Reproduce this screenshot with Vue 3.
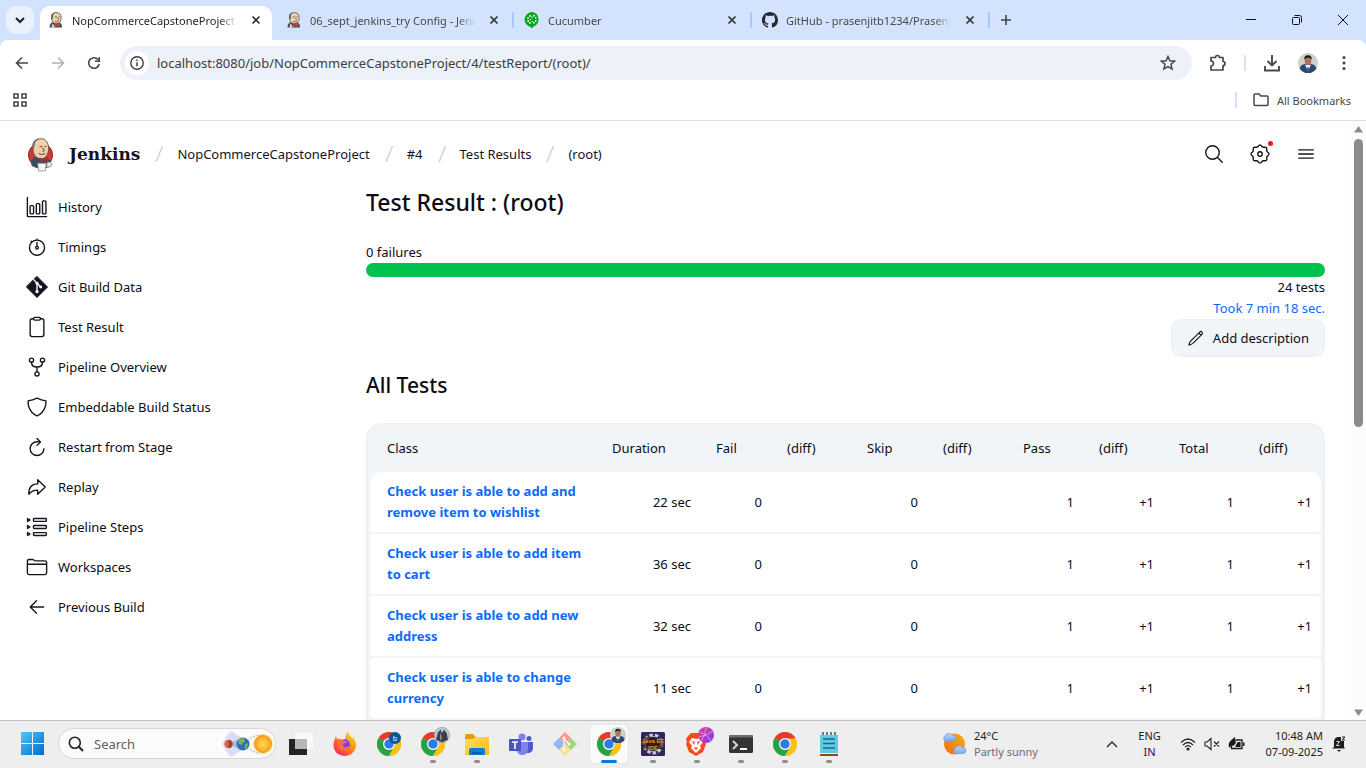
<script setup>
const tabs = [
  { title: 'NopCommerceCapstoneProject #4', icon: 'butler', active: true },
  { title: '06_sept_jenkins_try Config - Jenkins', icon: 'butler', line: true },
  { title: 'Cucumber', icon: 'cucumber', line: true },
  { title: 'GitHub - prasenjitb1234/Prasenjit', icon: 'github', line: true }
]

const crumbs = ['NopCommerceCapstoneProject', '#4', 'Test Results', '(root)']

const menu = [
  { label: 'History', d: ['M32 32v432a16 16 0 0016 16h432', 'M116 224h40a20 20 0 0120 20v152a20 20 0 01-20 20h-40a20 20 0 01-20-20V244a20 20 0 0120-20z', 'M260 176h40a20 20 0 0120 20v200a20 20 0 01-20 20h-40a20 20 0 01-20-20V196a20 20 0 0120-20z', 'M404 112h40a20 20 0 0120 20v264a20 20 0 01-20 20h-40a20 20 0 01-20-20V132a20 20 0 0120-20z'] },
  { label: 'Timings', d: ['M256 232v-80M256 88V72M132 132l-12-12', 'M256 96a176 176 0 10176 176A176 176 0 00256 96z', 'M288 272a32 32 0 11-64 0 32 32 0 0164 0z'] },
  { label: 'Git Build Data', git: true },
  { label: 'Test Result', d: ['M336 64h32a48 48 0 0148 48v320a48 48 0 01-48 48H144a48 48 0 01-48-48V112a48 48 0 0148-48h32', 'M202 32h108a26 26 0 0126 26v12a26 26 0 01-26 26H202a26 26 0 01-26-26V58a26 26 0 0126-26z'] },
  { label: 'Pipeline Overview', d: ['M176 96a48 48 0 11-96 0 48 48 0 0196 0z', 'M432 96a48 48 0 11-96 0 48 48 0 0196 0z', 'M304 416a48 48 0 11-96 0 48 48 0 0196 0z', 'M128 144c0 74 50 112 128 112s128-38 128-112M256 256v112'] },
  { label: 'Embeddable Build Status', d: ['M463.1 112.37C373.68 96.33 336.71 84.45 256 48c-80.71 36.45-117.68 48.33-207.1 64.37C32.7 369.13 240.58 457.79 256 464c15.42-6.21 223.3-94.87 207.1-351.63z'] },
  { label: 'Restart from Stage', d: ['M320 146s24.36-12-64-12a160 160 0 10160 160', 'M256 58l80 80-80 80'] },
  { label: 'Replay', d: ['M448 256L272 88v96C103.57 184 64 304.77 64 424c48.61-62.24 91.6-96 208-96v96z'] },
  { label: 'Pipeline Steps', d: ['M36 58l56 34-56 34zM36 222l56 34-56 34zM36 386l56 34-56 34z', 'M192 58h264a18 18 0 0118 18v32a18 18 0 01-18 18H192a18 18 0 01-18-18V76a18 18 0 0118-18z', 'M192 222h264a18 18 0 0118 18v32a18 18 0 01-18 18H192a18 18 0 01-18-18v-32a18 18 0 0118-18z', 'M192 386h264a18 18 0 0118 18v32a18 18 0 01-18 18H192a18 18 0 01-18-18v-32a18 18 0 0118-18z'] },
  { label: 'Workspaces', d: ['M440 432H72a40 40 0 01-40-40V120a40 40 0 0140-40h75.89a40 40 0 0122.19 6.72l27.84 18.56a40 40 0 0022.19 6.72H440a40 40 0 0140 40v240a40 40 0 01-40 40zM32 192h448'] },
  { label: 'Previous Build', d: ['M244 400L100 256l144-144M120 256h292'] }
]

const gear = Array.from({ length: 97 }, (_, i) => {
  const a = (i / 96) * Math.PI * 2
  const r = 190 + 18 * Math.cos(8 * a)
  return `${i ? 'L' : 'M'}${(256 + r * Math.sin(a)).toFixed(1)} ${(256 - r * Math.cos(a)).toFixed(1)}`
}).join('') + 'z'

const columns = ['Class', 'Duration', 'Fail', '(diff)', 'Skip', '(diff)', 'Pass', '(diff)', 'Total', '(diff)']
const rows = [
  { name: 'Check user is able to add and remove item to wishlist', time: '22 sec' },
  { name: 'Check user is able to add item to cart', time: '36 sec' },
  { name: 'Check user is able to add new address', time: '32 sec' },
  { name: 'Check user is able to change currency', time: '11 sec' }
]

const apps = [
  { id: 'taskview', name: 'Task view' },
  { id: 'firefox', name: 'Firefox' },
  { id: 'chrome', name: 'Chrome, profile b', badge: 'b' },
  { id: 'chrome', name: 'Chrome, group profile', badge: 'group', open: true },
  { id: 'explorer', name: 'File Explorer', open: true },
  { id: 'teams', name: 'Teams' },
  { id: 'gitapp', name: 'Git' },
  { id: 'chrome', name: 'Chrome, current profile', badge: 'person', open: true, current: true },
  { id: 'eclipse', name: 'Java EE IDE', open: true },
  { id: 'brave', name: 'Brave', badge: 'ball', open: true },
  { id: 'terminal', name: 'Terminal', open: true },
  { id: 'chrome', name: 'Chrome', open: true },
  { id: 'notepad', name: 'Notepad', open: true }
]
</script>

<template>
  <div class="screen">
    <svg class="defs" aria-hidden="true">
      <defs>
        <linearGradient id="win" x1="0" y1="0" x2="1" y2="1"><stop offset="0" stop-color="#4cc9f7" /><stop offset="1" stop-color="#0468c8" /></linearGradient>
        <linearGradient id="fold" x1="0" y1="0" x2="1" y2="1"><stop offset="0" stop-color="#ffdf6b" /><stop offset="1" stop-color="#fbb912" /></linearGradient>
        <linearGradient id="fox" x1="1" y1="0" x2=".2" y2="1"><stop offset="0" stop-color="#fff44f" /><stop offset=".45" stop-color="#ff980e" /><stop offset="1" stop-color="#ff1d62" /></linearGradient>
        <radialGradient id="sun"><stop offset="0" stop-color="#ffd95a" /><stop offset=".7" stop-color="#fdb32a" /><stop offset="1" stop-color="#f59a1b" /></radialGradient>
        <linearGradient id="wsun" x1="1" y1="0" x2="0" y2="1"><stop offset="0" stop-color="#f9ad1c" /><stop offset="1" stop-color="#ee6d16" /></linearGradient>
        <linearGradient id="cloud" x1="0" y1="0" x2="0" y2="1"><stop offset="0" stop-color="#bcd8f8" /><stop offset="1" stop-color="#7ea6ea" /></linearGradient>
        <linearGradient id="ball" x1="0" y1="0" x2="1" y2="1"><stop offset="0" stop-color="#e8399b" /><stop offset="1" stop-color="#7a3ff0" /></linearGradient>
      </defs>
      <symbol id="butler" viewBox="0 0 32 32">
        <path d="M3 31c0-7 3-10 7-11l12 1c4 1 6 4 6 10z" fill="#335061" />
        <path d="M8 5C11 0 20 0 24 4c3 4 3 10 1 14-2 5-7 6-11 5-5-2-9-8-6-18z" fill="#e8cfae" stroke="#4b443c" stroke-width="1.4" />
        <path d="M7 14C4 9 7 2 14 1c-2 3-4 4-4 8 0 2 0 4-1 6z" fill="#6b665f" />
        <path d="M14 10q2-1 4 0M21 10q2-1 3 0M19 11l2 4-2 1M14 19q4 2 8-1" fill="none" stroke="#4b443c" stroke-width="1.3" />
        <path d="M13 23l5 2 6-3v8l-5-2-5 3z" fill="#d33833" />
        <path d="M9 22l5 9h-7z" fill="#f0d6b7" />
      </symbol>
      <symbol id="cucumber" viewBox="0 0 16 16">
        <path d="M8 0A7.500 7.500 0 0 0 6 14.700L8.500 16.500l.7-1.900A7.500 7.500 0 0 0 8 0z" fill="#00a818" />
        <g fill="#fff"><circle cx="6" cy="4" r=".9" /><circle cx="10" cy="3.700" r=".9" /><circle cx="4" cy="6.200" r=".9" /><circle cx="4.200" cy="9" r=".9" /><circle cx="6" cy="11" r=".9" /><circle cx="9.800" cy="10.800" r=".9" /><circle cx="11.700" cy="9" r=".9" /><circle cx="8" cy="5" r=".7" /><circle cx="11.700" cy="5.800" r=".9" /><circle cx="6.500" cy="7.500" r=".7" /><circle cx="8.200" cy="9.400" r=".7" /></g>
      </symbol>
      <symbol id="github" viewBox="0 0 16 16">
        <path fill="#24292f" d="M8 0C3.580 0 0 3.580 0 8c0 3.540 2.290 6.530 5.470 7.590.4.070.55-.17.55-.38 0-.19-.01-.82-.01-1.490-2.010.37-2.530-.49-2.690-.94-.09-.23-.48-.94-.82-1.130-.28-.15-.68-.52-.01-.53.63-.01 1.080.58 1.230.82.72 1.210 1.870.87 2.330.66.07-.52.28-.87.51-1.070-1.780-.2-3.640-.89-3.640-3.950 0-.87.31-1.590.82-2.150-.08-.2-.36-1.020.08-2.120 0 0 .67-.21 2.200.82.64-.18 1.320-.27 2-.27s1.360.09 2 .27c1.530-1.040 2.200-.82 2.200-.82.44 1.100.16 1.920.08 2.120.51.56.82 1.270.82 2.150 0 3.070-1.870 3.750-3.650 3.950.29.25.54.73.54 1.480 0 1.070-.01 1.930-.01 2.200 0 .21.15.46.55.38A8.010 8.010 0 0 0 16 8c0-4.420-3.580-8-8-8z" />
      </symbol>
      <symbol id="face" viewBox="0 0 24 24">
        <circle cx="12" cy="12" r="12" fill="#cfcecb" />
        <path d="M2 19c1-5 5-6 10-6s9 1 10 6a12 12 0 0 1-20 0z" fill="#2d4770" />
        <path d="M8.500 14l3.500 8 3.500-8z" fill="#e8f0ff" />
        <ellipse cx="12" cy="9" rx="4" ry="5.500" fill="#a8745a" />
        <path d="M7.500 8c-1-7 10-7 9 0-1-3-7-3-9 0z" fill="#1d1a1c" />
        <path d="M12 16l-1 3 1 4 1-4z" fill="#203050" />
      </symbol>
      <symbol id="chrome" viewBox="0 0 24 24">
        <circle cx="12" cy="12" r="12" fill="#fbc116" />
        <path d="M12 12L1.600 6A12 12 0 0 1 22.400 6z" fill="#e33b2e" />
        <path d="M1.600 6A12 12 0 0 0 12 24l5.200-9L12 12z" fill="#2aa148" />
        <path d="M12 6.500h10.700A12 12 0 0 1 12 24l5-9z" fill="#fbc116" />
        <circle cx="12" cy="12" r="6" fill="#fff" />
        <circle cx="12" cy="12" r="4.700" fill="#2a7bea" />
      </symbol>
      <symbol id="taskview" viewBox="0 0 24 24">
        <path d="M0 7h18v16H0z" fill="#242424" /><path d="M6 1h18v16H6z" fill="#f9f9f9" /><path d="M6 7h12v10H6z" fill="#b7b7b7" />
      </symbol>
      <symbol id="firefox" viewBox="0 0 24 24">
        <path d="M15 0c1 3 3 4 4 6l1-1c3 4 4 7 3 10-1 5-6 9-11 9C5 24 0 19 .5 12 .8 9 2 6 3 4l1 3 4 1 4-1c0-3 1-6 3-7z" fill="url(#fox)" />
        <circle cx="12" cy="12.500" r="5" fill="#7542e5" />
        <path d="M2 7c4 0 5-1 9 2 2 0 3 0 3 1-1 2-4 1-4 3 0 3 6 3 8-1-1 6-4 8-9 6-4-2-4-7-4-8z" fill="#ff7139" opacity=".9" />
      </symbol>
      <symbol id="explorer" viewBox="0 0 24 24">
        <path d="M0 4q0-2 2-2h6l3 3h11q2 0 2 2v8H0z" fill="#e79c0b" />
        <path d="M0 7h8l3-2h11q2 0 2 2v16H0z" fill="url(#fold)" />
        <path d="M4 23v-5q0-2 2-2h12q2 0 2 2v5z" fill="#0f7bd4" /><path d="M7 20h10v2H7z" fill="#0a5ca8" />
      </symbol>
      <symbol id="teams" viewBox="0 0 24 24">
        <circle cx="20" cy="6.500" r="2.500" fill="#5059c9" /><circle cx="13" cy="5" r="3.500" fill="#7b83eb" />
        <path d="M16 10h8v6q0 4-4 5h-4z" fill="#5059c9" /><path d="M8 10h11v7q0 6-6 6-4 0-5-4z" fill="#7b83eb" />
        <rect y="7" width="12" height="12" rx="1" fill="#4b53bc" /><path d="M3 10h6M6 10v7" stroke="#fff" stroke-width="1.600" />
      </symbol>
      <symbol id="gitapp" viewBox="0 0 24 24">
        <path d="M12 0l6 6-6 6-6-6z" fill="#ff9a8b" /><path d="M6 6l6 6-6 6-6-6z" fill="#8db8fa" /><path d="M18 6l6 6-6 6-6-6z" fill="#99d87c" /><path d="M12 12l6 6-6 6-6-6z" fill="#fbe18d" />
        <path d="M11 5v13M11 7l5 5" stroke="#f2efee" stroke-width="1.500" /><circle cx="11" cy="6" r="1.500" fill="#fff" /><circle cx="11" cy="18" r="1.500" fill="#fff" /><circle cx="16" cy="12" r="1.500" fill="#fff" />
      </symbol>
      <symbol id="eclipse" viewBox="0 0 24 24">
        <rect width="24" height="24" rx="1.500" fill="#36235f" />
        <circle cx="12" cy="12" r="9" fill="none" stroke="#c9c9d2" stroke-width="3" stroke-dasharray="3.500 2" /><circle cx="12" cy="12" r="7.500" fill="#252026" stroke="#b5b5bd" />
        <rect x="1" y="5" width="22" height="12" fill="#2d1b28" opacity=".65" />
      </symbol>
      <symbol id="brave" viewBox="0 0 24 24">
        <path d="M6 1h9l3 3 3 3-1 3 1 2-3 8-7 4-7-4-3-8 1-2-1-3 2-3z" fill="#fb4a1d" />
        <path d="M7 6l4 1 5-1 2 4-3 4 1 2-5 5-5-5 1-2-3-4z" fill="#fff" /><path d="M7 9l3 1-1 3zM15 9l-3 1 1 3zM9 16l2-1 2 1-2 2z" fill="#fb4a1d" />
      </symbol>
      <symbol id="terminal" viewBox="0 0 24 24">
        <rect y="3" width="24" height="18" rx="1.500" fill="#343434" /><path d="M0 5.500V4.500Q0 3 1.500 3h21Q24 3 24 4.500v1z" fill="#6c6c6c" />
        <path d="M4 9l4 4-4 4" fill="none" stroke="#d4d4d4" stroke-width="2" /><path d="M11 17h7" stroke="#fff" stroke-width="2" />
      </symbol>
      <symbol id="notepad" viewBox="0 0 24 24">
        <path d="M3 3h18v18H3z" fill="#5fcbe0" /><path d="M3 21h18v3H3z" fill="#924912" /><path d="M3 21h18v1H3z" fill="#f4efe9" />
        <path d="M6 0v3M10 0v3M14 0v3M18 0v3" stroke="#1d5f7c" stroke-width="1.500" /><path d="M6 7h12M6 11.500h12M6 16h12" stroke="#17698b" stroke-width="1.500" />
      </symbol>
    </svg>

    <header class="browser">
      <div class="tabstrip">
        <button class="tabsearch" aria-label="Search tabs"><svg width="12" height="12" viewBox="0 0 12 12"><path d="M2 4l4 4 4-4" fill="none" stroke="#1f1f1f" stroke-width="2" /></svg></button>
        <div v-for="t in tabs" :key="t.title" class="tab" :class="{ active: t.active, line: t.line }">
          <svg width="16" height="16"><use :href="'#' + t.icon" /></svg>
          <span class="tabtitle">{{ t.title }}</span>
          <button class="tabclose" aria-label="Close tab"><svg width="10" height="10" viewBox="0 0 10 10"><path d="M1.500 1.500l7 7m0-7l-7 7" stroke="#333" stroke-width="1.700" /></svg></button>
        </div>
        <button class="newtab" aria-label="New tab"><svg width="12" height="12" viewBox="0 0 12 12"><path d="M6 1v10M1 6h10" stroke="#444" stroke-width="1.600" /></svg></button>
        <div class="winbuttons">
          <button aria-label="Minimize"><svg width="12" height="12"><path d="M1 5.500h10" stroke="#111" /></svg></button>
          <button aria-label="Restore"><svg width="12" height="12" fill="none" stroke="#111"><rect x="1.500" y="3.500" width="7" height="7" rx="1" /><path d="M3.500 1.500h5a2 2 0 0 1 2 2v5" /></svg></button>
          <button aria-label="Close window"><svg width="12" height="12"><path d="M1 1l10 10M11 1L1 11" stroke="#111" /></svg></button>
        </div>
      </div>

      <div class="toolbar">
        <button class="nav" aria-label="Back"><svg width="16" height="16" viewBox="0 0 16 16"><path d="M14 8H3M8 2.500L2.500 8 8 13.500" fill="none" stroke="#474747" stroke-width="1.600" /></svg></button>
        <button class="nav" aria-label="Forward"><svg width="16" height="16" viewBox="0 0 16 16"><path d="M2 8h11M8 2.500L13.500 8 8 13.500" fill="none" stroke="#b0b0b0" stroke-width="1.600" /></svg></button>
        <button class="nav" aria-label="Reload"><svg width="16" height="16" viewBox="0 0 16 16"><path d="M13.200 9A5.300 5.300 0 1 1 12 4.500l1 1" fill="none" stroke="#474747" stroke-width="1.600" /><path d="M14 2v5H9V5.500h3.500V2z" fill="#474747" /></svg></button>
        <div class="omnibox">
          <button class="info" aria-label="Site information"><svg width="14" height="14" viewBox="0 0 14 14"><circle cx="7" cy="7" r="6.200" fill="none" stroke="#3c3c3c" stroke-width="1.400" /><path d="M7 6.200v4M7 3.500v1.500" stroke="#3c3c3c" stroke-width="1.500" /></svg></button>
          <input class="url" aria-label="Address" value="localhost:8080/job/NopCommerceCapstoneProject/4/testReport/(root)/" />
          <button class="star" aria-label="Bookmark"><svg width="16" height="16" viewBox="0 0 16 16"><path d="M8 1.500l1.900 4.300 4.700.4-3.600 3.100 1.100 4.600L8 11.500l-4.100 2.400L5 9.300 1.400 6.200l4.700-.4z" fill="none" stroke="#474747" stroke-width="1.500" /></svg></button>
        </div>
        <div class="tools">
          <button class="nav" aria-label="Extensions"><svg width="18" height="18" viewBox="0 0 18 18"><path d="M2 3.500h4.500a2 2 0 0 1 4 0h3.500v4a2 2 0 0 1 0 4V16H2v-4a2.500 2.500 0 0 0 0-5z" fill="none" stroke="#474747" stroke-width="1.700" stroke-linejoin="round" /></svg></button>
          <span class="divider"></span>
          <button class="nav" aria-label="Downloads"><svg width="18" height="18" viewBox="0 0 18 18"><path d="M9 1v10M4.500 7L9 11.500 13.500 7M2 12v4.500h14V12" fill="none" stroke="#474747" stroke-width="1.900" /></svg></button>
          <button class="nav" aria-label="Profile"><svg width="20" height="20"><use href="#face" /></svg></button>
          <button class="nav" aria-label="Menu"><svg width="4" height="16" fill="#474747"><circle cx="2" cy="2.500" r="1.600" /><circle cx="2" cy="8" r="1.600" /><circle cx="2" cy="13.500" r="1.600" /></svg></button>
        </div>
      </div>

      <div class="bookmarks">
        <button class="nav" aria-label="Apps"><svg width="14" height="14" fill="none" stroke="#474747" stroke-width="1.600"><path d="M1 1h4v4H1zM9 1h4v4H9zM1 9h4v4H1zM9 9h4v4H9z" /></svg></button>
        <button class="allmarks"><svg width="16" height="14" viewBox="0 0 16 14"><path d="M1 2q0-1 1-1h4l2 2h6q1 0 1 1v7q0 1.500-1 1.500H2q-1 0-1-1.500z" fill="none" stroke="#474747" stroke-width="1.500" /></svg>All Bookmarks</button>
      </div>
    </header>

    <div class="viewport">
      <div class="page">
        <nav class="crumbbar" aria-label="Breadcrumbs">
          <a href="#" class="brand">
            <svg class="logo" viewBox="0 0 28 36">
              <circle cx="14" cy="18.500" r="12.500" fill="#d33833" stroke="#7c2a27" />
              <path d="M5 30C3 25 6 21 9 20l10 1c5 1 7 5 4 10q-9 4-18-1z" fill="#335061" />
              <path d="M7 7C9 1 17 0 20 4c3 4 3 10 1 14-2 4-5 5-9 4C7 20 5 15 7 7z" fill="#efd0a8" stroke="#4a4038" stroke-width=".8" />
              <path d="M6 12C4 7 7 2 13 1c-3 3-5 4-5 7l-1 5z" fill="#787774" />
              <path d="M13 10q2-1 3 0M18 10q1-1 2 0M16 11l2 3-2 1M12 17q3 2 7 0" fill="none" stroke="#493f38" />
              <path d="M13 21l4 2 4-2v5l-4-2-4 2z" fill="#ba2827" />
              <path d="M11 27h9l-1 8h-7z" fill="#f8f8f8" stroke="#777" stroke-width=".7" /><path d="M21 26q5-1 5 3l-3 2h-3z" fill="#e5e8eb" stroke="#777" stroke-width=".7" />
            </svg>
            <span class="brandname">Jenkins</span>
          </a>
          <template v-for="c in crumbs" :key="c">
            <svg class="slash" width="8" height="18"><path d="M7.500 1L1 17" stroke="#c9d4e4" stroke-width="1.500" /></svg>
            <a href="#" class="crumb">{{ c }}</a>
          </template>
          <div class="actions">
            <button aria-label="Search"><svg class="ico" viewBox="0 0 512 512"><path d="M221 64a157 157 0 10157 157A157 157 0 00221 64zM338 338l110 110" /></svg></button>
            <button class="dotted" aria-label="Manage Jenkins"><svg class="ico" viewBox="0 0 512 512"><path :d="gear" /><circle cx="256" cy="256" r="52" /></svg></button>
            <button aria-label="More"><svg class="ico" viewBox="0 0 512 512"><path d="M88 160h336M88 256h336M88 352h336" /></svg></button>
          </div>
        </nav>

        <div class="columns">
          <aside class="side">
            <a v-for="m in menu" :key="m.label" href="#">
              <svg v-if="m.git" class="ico" viewBox="0 0 24 24"><path class="solid" d="M12 .5L23.500 12 12 23.500.5 12z" /><path class="gitline" d="M8.500 4l3.500 4v9M12 8l4 4" /><circle class="gitdot" cx="12" cy="8" r="1.600" /><circle class="gitdot" cx="12" cy="17" r="1.800" /><circle class="gitdot" cx="16" cy="12" r="1.600" /></svg>
              <svg v-else class="ico" viewBox="0 0 512 512"><path v-for="d in m.d" :key="d" :d="d" /></svg>
              {{ m.label }}
            </a>
          </aside>

          <main class="main">
            <h1>Test Result : (root)</h1>
            <div class="line">0 failures</div>
            <div class="bar" role="img" aria-label="All tests passed"></div>
            <div class="line right">24 tests</div>
            <div class="line right"><a href="#">Took 7 min 18 sec.</a></div>
            <button class="describe"><svg class="ico small" viewBox="0 0 512 512"><path d="M362 86L102 346c-24 26-38 62-48 112 50-10 86-24 112-48l260-260a45 45 0 00-64-64zM334 114l64 64" /></svg>Add description</button>
            <h2>All Tests</h2>
            <div class="tablebox">
              <table>
                <colgroup><col v-for="(c, i) in columns" :key="i" :class="'c' + i" /></colgroup>
                <thead><tr><th v-for="(c, i) in columns" :key="i" scope="col">{{ c }}</th></tr></thead>
                <tbody>
                  <tr v-for="r in rows" :key="r.name">
                    <td class="name"><a href="#">{{ r.name }}</a></td>
                    <td>{{ r.time }}</td><td>0</td><td></td><td>0</td><td></td><td>1</td><td>+1</td><td>1</td><td>+1</td>
                  </tr>
                </tbody>
              </table>
            </div>
          </main>
        </div>
      </div>
      <div class="scrollbar" aria-hidden="true">
        <svg width="9" height="7"><path d="M4.500 0L9 6.500H0z" fill="#8b8b8b" /></svg>
        <div class="track"><div class="thumb"></div></div>
        <svg width="9" height="7"><path d="M4.500 7L0 .5h9z" fill="#8b8b8b" /></svg>
      </div>
    </div>

    <footer class="taskbar">
      <button class="start" aria-label="Start"><svg width="23" height="23" viewBox="0 0 23 23" fill="url(#win)"><path d="M0 0h11v11H0zM12 0h11v11H12zM0 12h11v11H0zM12 12h11v11H12z" /></svg></button>
      <label class="search">
        <svg width="16" height="16" viewBox="0 0 16 16"><circle cx="6.800" cy="6.800" r="5.500" fill="none" stroke="#222" stroke-width="1.600" /><path d="M10.800 10.800l4.200 4.200" stroke="#222" stroke-width="2" /></svg>
        <input aria-label="Search" placeholder="Search" />
        <svg class="planets" width="52" height="26" viewBox="0 0 52 26">
          <path d="M0 13L6 3l4-3 4 3 6 4v12l-6 4-4 3-4-3z" fill="#dcdcf5" /><path d="M4 13L20 7v12z" fill="#a9bde9" />
          <path d="M24 13q5-10 17-9M24 13q5 10 17 9" fill="none" stroke="#8a8a8a" stroke-dasharray="2 1.500" stroke-width=".8" />
          <circle cx="6.500" cy="13" r="4.200" fill="#dc6742" /><path d="M6.500 9a4 4 0 0 1 0 8z" fill="#a13d35" />
          <circle cx="21" cy="13" r="6.500" fill="#2d6fb5" /><path d="M17 8l5-1 1 3-4 4-3-2zM23 13l3-1-1 5-2 2z" fill="#7bb45c" />
          <circle cx="41" cy="13" r="10" fill="#ffe58c" /><circle cx="41" cy="13" r="8.500" fill="url(#sun)" stroke="#f29b23" />
        </svg>
      </label>
      <div class="apps">
        <button v-for="(a, i) in apps" :key="i" :aria-label="a.name" :class="{ open: a.open, current: a.current }">
          <svg width="24" height="24" viewBox="0 0 24 24">
            <use :href="'#' + a.id" />
            <template v-if="a.id === 'eclipse'"><text x="12" y="11" class="ide">Java EE</text><text x="12" y="18" class="ide">IDE</text></template>
          </svg>
          <svg v-if="a.badge" class="badge" :class="{ b: a.badge === 'b' }" viewBox="0 0 24 24">
            <use v-if="a.badge === 'person'" href="#face" />
            <g v-else-if="a.badge === 'b'"><circle cx="12" cy="12" r="12" fill="#07589a" /><text x="12" y="17" class="letter">b</text></g>
            <g v-else-if="a.badge === 'ball'"><circle cx="12" cy="12" r="12" fill="url(#ball)" /><path d="M1 15q13-2 21-9M2 8q12 2 17 13M12 1q-1 12-7 20" fill="none" stroke="#f6a6df" stroke-width="1.200" /></g>
            <g v-else><circle cx="12" cy="12" r="11.500" fill="#b4cdd3" stroke="#8d9da3" /><path d="M3 19l3-11 4-4 2 5 3-5 4 5 2 10-9 4z" fill="#39414e" /><path d="M9 8l3 8-3 5z" fill="#9a8c89" /></g>
          </svg>
        </button>
      </div>
      <div class="weather">
        <svg width="25" height="24" viewBox="0 0 25 24"><circle cx="12.500" cy="12" r="10.500" fill="url(#wsun)" /><path d="M3 9a3 3 0 0 1 0-5 4 4 0 0 1 7-1q4 0 4 3t-3 3z" fill="url(#cloud)" stroke="#7298dc" stroke-width=".7" /><path d="M13 21.500a3 3 0 0 1 0-5 4 4 0 0 1 7-1q4 0 4 3t-3 3z" fill="url(#cloud)" stroke="#7298dc" stroke-width=".7" /></svg>
        <div><div>24°C</div><div class="muted">Partly sunny</div></div>
      </div>
      <div class="tray">
        <svg width="12" height="8" viewBox="0 0 12 8"><path d="M1 7l5-5 5 5" fill="none" stroke="#222" stroke-width="1.300" /></svg>
        <div class="lang"><div>ENG</div><div>IN</div></div>
        <div class="status">
          <svg width="16" height="14" viewBox="0 0 16 14" fill="none" stroke="#222" stroke-width="1.200"><path d="M1 5.500Q8-1.500 15 5.500M3 8q5-5 10 0M5 10.200q3-3 6 0" /><circle cx="8" cy="12" r="1" fill="#222" /></svg>
          <svg width="16" height="14" viewBox="0 0 16 14" fill="none" stroke="#222" stroke-width="1.100"><path d="M1 5h2l4-3.500v11L3 9H1zM10 4.500l5 5m0-5l-5 5" /></svg>
          <svg width="17" height="14" viewBox="0 0 17 14"><path d="M8 3h6v8.500H3.500V9" fill="none" stroke="#1b1b1b" stroke-width="1.300" /><path d="M15 5.500h1.500V9H15zM9.500 5H12.500v5H7z" fill="#1b1b1b" /><path d="M1 10C-.5 5 3 4 6.500 0 9 5 8 9 3 9l-1.500 2z" fill="#1b1b1b" /></svg>
        </div>
        <div class="clock"><div>10:48 AM</div><div>07-09-2025</div></div>
        <svg width="14" height="16" viewBox="0 0 14 16"><path d="M2 5q1-4 4.500-4H9v4h3v6l1 1.500H0L2 11z" fill="#1b1b1b" /><path d="M5 14h4q-2 3-4 0z" fill="#1b1b1b" /><path d="M4.500 5.500h3l-3 4h3" fill="none" stroke="#ddd" /><path d="M10 1h3l-3 3h3" fill="none" stroke="#1b1b1b" /></svg>
      </div>
    </footer>
  </div>
</template>

<style>
html, body { margin: 0; overflow: hidden; }
</style>

<style scoped>
.screen { display: flex; flex-direction: column; height: 100vh; background: #fff; color: #0c0c16; font-family: "Noto Sans", "Open Sans", sans-serif; font-size: 13px; line-height: 21px; }
.defs { position: absolute; width: 0; height: 0; }
button { border: 0; padding: 0; background: none; font: inherit; color: inherit; display: flex; align-items: center; justify-content: center; }
input { border: 0; padding: 0; background: none; font: inherit; outline: 0; min-width: 0; }
a { color: #0b6aff; text-decoration: none; }
svg { flex: none; display: block; }

.browser { border-bottom: 1px solid #dfdfdf; background: #d3e3fd; }
.tabstrip { display: flex; align-items: stretch; height: 40px; font-size: 11px; color: #474747; }
.tabsearch { width: 28px; height: 28px; margin: 6px 3px 0 6px; border-radius: 10px; background: #e9f1fe; }
.tab { position: relative; display: flex; align-items: center; width: 238px; box-sizing: border-box; padding: 0 10px 0 11px; gap: 8px; }
.tab.line::after { content: ""; position: absolute; right: -1px; top: 12px; width: 2px; height: 16px; background: #a8c7fa; }
.tab > * { position: relative; }
.tab.active { color: #1f1f1f; }
.tab.active::before { content: ""; position: absolute; inset: 6px 3px 0; background: #fff; border-radius: 10px 10px 0 0; }
.tabtitle { flex: 1; white-space: nowrap; overflow: hidden; mask-image: linear-gradient(90deg, #000 88%, transparent 99%); }
.tabclose { width: 18px; height: 18px; }
.newtab { width: 34px; }
.winbuttons { display: flex; margin-left: auto; }
.winbuttons button { width: 46px; }
.toolbar { display: flex; align-items: center; height: 46px; padding: 0 4px; background: #fff; border-radius: 8px 8px 0 0; }
.nav { width: 36px; height: 34px; }
.omnibox { display: flex; align-items: center; flex: 1; height: 34px; margin-left: 8px; padding: 0 5px; border-radius: 17px; background: #ecf1fa; box-sizing: border-box; }
.info { width: 24px; height: 24px; border-radius: 50%; background: #fff; }
.url { flex: 1; margin-left: 8px; color: #3c3d40; }
.star { width: 38px; height: 30px; }
.tools { display: flex; align-items: center; margin-left: 8px; }
.divider { width: 2px; height: 16px; margin: 0 8px; background: #d3e3fd; }
.bookmarks { display: flex; align-items: center; justify-content: space-between; height: 28px; padding: 0 15px 6px 2px; background: #fff; font-size: 11px; color: #474747; }
.bookmarks .nav { height: 28px; }
.allmarks { gap: 8px; height: 16px; padding-left: 16px; border-left: 2px solid #d3e3fd; }

.viewport { flex: 1; display: flex; min-height: 0; }
.page { flex: 1; min-width: 0; overflow: hidden; }
.scrollbar { display: flex; flex-direction: column; align-items: center; width: 15px; box-sizing: border-box; padding: 5px 0 4px; background: #fcfcfc; }
.track { flex: 1; width: 9px; padding: 6px 0; box-sizing: border-box; }
.thumb { width: 9px; height: 51%; border-radius: 5px; background: #8b8b8b; }

.ico { width: 22px; height: 22px; fill: none; stroke: #14141f; stroke-width: 32; stroke-linecap: round; stroke-linejoin: round; }
.ico.small { width: 18px; height: 18px; }
.ico .solid { fill: #14141f; stroke: #14141f; stroke-width: 1; }
.ico .gitline { stroke: #fff; stroke-width: 1.500; }
.ico .gitdot { fill: #fff; stroke: none; }

.crumbbar { display: flex; align-items: center; height: 66px; padding: 0 27px; }
.brand { display: flex; align-items: center; gap: 15px; margin-right: 15px; }
.logo { width: 27px; height: 35px; }
.brandname { font: bold 17px/24px "DejaVu Serif", serif; color: #14141f; }
.crumb { margin: 0 15px 0 14px; color: #14141f; }
.actions { display: flex; gap: 10px; margin-left: auto; }
.actions button { width: 36px; height: 36px; }
.dotted { position: relative; }
.dotted::after { content: ""; position: absolute; top: 5px; right: 5px; width: 5px; height: 5px; border-radius: 50%; background: #fe1420; }

.columns { display: flex; }
.side { flex: none; width: 366px; box-sizing: border-box; padding-left: 26px; }
.side a { display: flex; align-items: center; gap: 10px; height: 40px; color: #0c0c16; }
.main { flex: 1; min-width: 0; padding-right: 26px; display: flex; flex-direction: column; }
h1, h2 { margin: 0; font-weight: 500; }
h1 { font-size: 23px; line-height: 30px; margin-bottom: 25px; }
h2 { font-size: 21px; line-height: 28px; margin: 14px 0 24px; }
.right { text-align: right; }
.bar { height: 14px; border-radius: 7px; background: #00c24f; }
.describe { align-self: flex-end; gap: 8px; height: 38px; padding: 0 14px; border: 2px solid #edf1f5; border-radius: 10px; background: #f2f5f8; box-sizing: border-box; }
.tablebox { padding: 0 2px; border: 2px solid #edf1f4; border-radius: 16px 16px 0 0; background: #f2f5f8; }
table { width: 100%; table-layout: fixed; border-collapse: separate; border-spacing: 0 2px; }
.c1 { width: 104px; } .c2 { width: 71px; } .c3, .c5, .c7, .c8 { width: 80px; } .c4, .c6 { width: 76px; } .c9 { width: 78px; }
th { height: 43px; padding: 0 9px 0 16px; font-weight: 400; text-align: left; }
td { height: 42px; padding: 9px 9px 9px 16px; background: #fff; text-align: right; }
th:first-child, td:first-child { padding-left: 17px; text-align: left; }
td:first-child { border-radius: 4px 0 0 4px; }
td:last-child { border-radius: 0 4px 4px 0; }
tbody tr:first-child td:first-child { border-top-left-radius: 12px; }
tbody tr:first-child td:last-child { border-top-right-radius: 12px; }
.name { font-weight: 700; }

.taskbar { display: flex; align-items: center; height: 48px; box-sizing: border-box; border-top: 1px solid #bfbfbf; background: #eee; padding: 0 20px 2px 21px; font-size: 11px; line-height: 16px; color: #1b1b1b; }
.search { display: flex; align-items: center; width: 218px; height: 31px; box-sizing: border-box; margin-left: 14px; padding: 0 1px 0 9px; gap: 10px; border: 1px solid #d6d6d6; border-radius: 16px; background: #fbfbfb; }
.search input { flex: 1; font-size: 13px; }
.search input::placeholder { color: #5f5f5f; opacity: 1; }
.apps { display: flex; gap: 6px; margin-left: 6px; }
.apps button { position: relative; width: 38px; height: 38px; border-radius: 4px; }
.apps .current { background: #fafafa; box-shadow: 0 0 1px #aaa; }
.apps .open::after { content: ""; position: absolute; bottom: 0; left: 16px; width: 6px; height: 3px; border-radius: 2px; background: #8c8c8c; }
.apps .current::after { left: 11px; width: 16px; background: #0a78d4; }
.badge { position: absolute; top: 2px; right: 2px; width: 16px; height: 16px; }
.badge.b { top: 7px; right: 7px; width: 12px; height: 12px; }
.letter { font: 15px "Open Sans", sans-serif; fill: #fff; text-anchor: middle; }
.ide { font: bold 6px "Liberation Sans", sans-serif; fill: #f59420; text-anchor: middle; }
.weather { display: flex; align-items: center; gap: 7px; margin-left: 94px; }
.muted { color: #6b6b6b; }
.tray { display: flex; align-items: center; margin-left: auto; }
.lang { width: 38px; margin: 0 11px 0 13px; text-align: center; }
.status { display: flex; align-items: center; gap: 8px; }
.clock { margin: 0 9px 0 21px; text-align: right; }
</style>
